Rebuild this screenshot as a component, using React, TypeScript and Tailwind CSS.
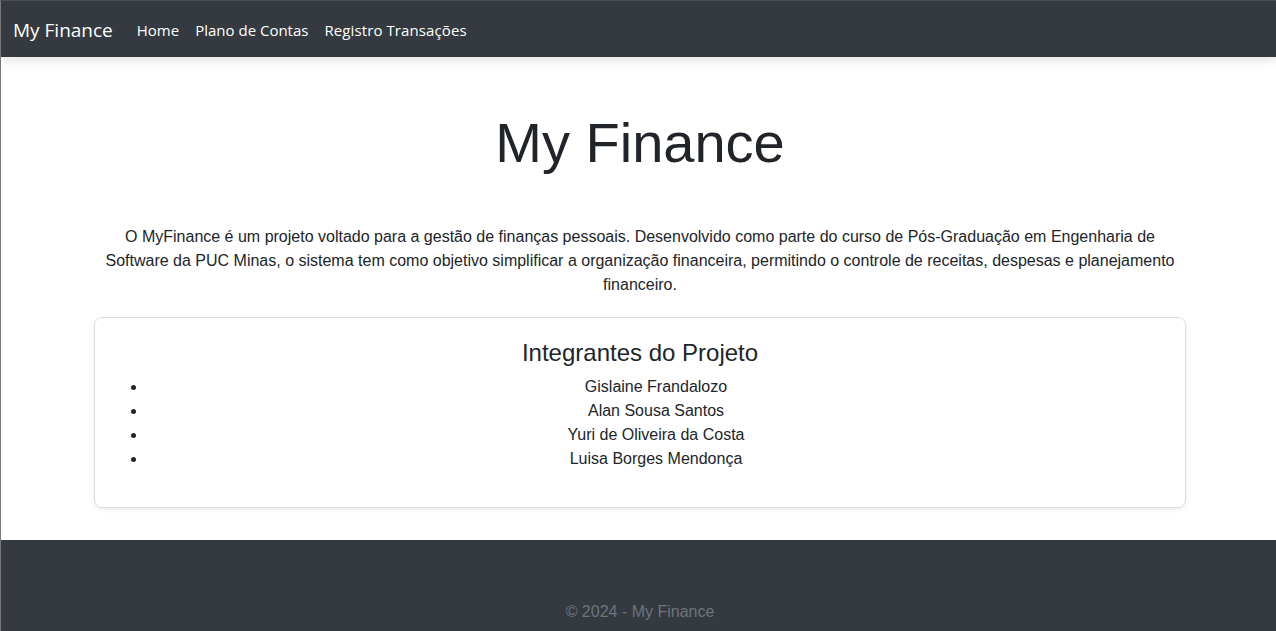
import React from "react";

const members = [
  "Gislaine Frandalozo",
  "Alan Sousa Santos",
  "Yuri de Oliveira da Costa",
  "Luisa Borges Mendonça",
];

export default function App() {
  return (
    <div
      className="h-[631px] overflow-hidden flex flex-col bg-white border-l border-l-[#7a7a7a] border-t border-t-[#4a4d52] text-[#212529]"
      style={{ fontFamily: '"Liberation Sans", Arial, sans-serif' }}
    >
      <nav
        className="relative z-10 h-[56px] shrink-0 bg-[#343a40] flex items-center pl-[12px] pt-[2px] shadow-[0_3px_10px_rgba(0,0,0,0.12)]"
        style={{ fontFamily: '"Open Sans", "Noto Sans", sans-serif' }}
      >
        <span className="text-[19px] text-white mr-[16px] leading-none">My Finance</span>
        <div className="flex items-center">
          <a className="px-[8px] text-[15px] text-white leading-none">Home</a>
          <a className="px-[8px] text-[15px] text-white leading-none">Plano de Contas</a>
          <a className="px-[8px] text-[15px] text-white leading-none tracking-[0.1px]">Registro Transações</a>
        </div>
      </nav>

      <main className="flex-1 flex flex-col items-center pl-[3px]">
        <h1 className="mt-[52px] text-[56px] leading-[67px] font-normal text-center">My Finance</h1>
        <p className="mt-[49px] w-[1092px] text-[16px] leading-[24px] text-center">
          O MyFinance é um projeto voltado para a gestão de finanças pessoais. Desenvolvido como parte do curso de
          Pós-Graduação em Engenharia de Software da PUC Minas, o sistema tem como objetivo simplificar a organização
          financeira, permitindo o controle de receitas, despesas e planejamento financeiro.
        </p>
        <div className="mt-[20px] w-[1092px] border border-[#dcdcdc] rounded-[8px] p-5 shadow-[0_2px_4px_rgba(0,0,0,0.075)]">
          <h5 className="text-[24px] leading-[29px] text-center mb-[8px]">Integrantes do Projeto</h5>
          <ul className="list-disc pl-[32px] mb-[16px]">
            {members.map((m) => (
              <li key={m} className="text-[16px] leading-[24px] text-center">
                {m}
              </li>
            ))}
          </ul>
        </div>
      </main>

      <footer className="h-[91px] shrink-0 bg-[#343a40] flex justify-center pt-[60px] pl-[3px]">
        <span className="text-[16px] leading-[24px] text-[#6c757d]">© 2024 - My Finance</span>
      </footer>
    </div>
  );
}
